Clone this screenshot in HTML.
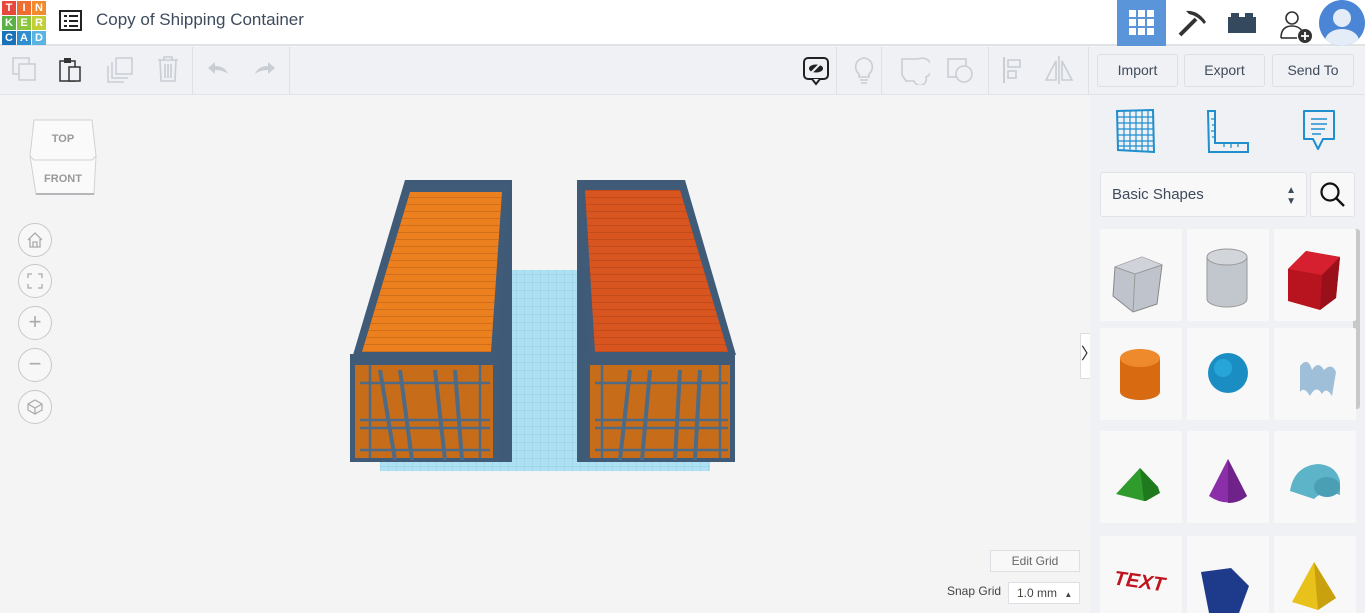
<!DOCTYPE html>
<html style="overflow:hidden;height:613px"><head><meta charset="utf-8"><style>
*{box-sizing:border-box;margin:0;padding:0}
html,body{overflow:hidden}
body{width:1365px;height:613px;overflow:hidden;font-family:"Liberation Sans",sans-serif;background:#f4f4f5;position:relative}
.abs{position:absolute}
#hdr{left:0;top:0;width:1365px;height:46px;background:#fff;border-bottom:2px solid #dfe2e6}
#tb{left:0;top:47px;width:1365px;height:48px;background:#f0f1f4;border-bottom:1px solid #e1e3e7}
.btn{position:absolute;top:54px;height:33px;border:1px solid #dcdfe3;border-radius:3px;background:#f0f1f4;color:#3e4b5b;font-size:14px;text-align:center;line-height:31px}
#side{left:1090px;top:95px;width:275px;height:518px;background:#f0f1f4;overflow:hidden}
.card{position:absolute;width:82px;height:92px;background:#f8f8f9;border-radius:2px;overflow:hidden}
.circ{position:absolute;left:18px;width:34px;height:34px;border:1px solid #c5c8cc;border-radius:50%;background:#f7f7f7;color:#aaa;text-align:center;line-height:30px;font-size:22px}
</style></head><body>
<div id="hdr" class="abs">
 <div class="abs" style="left:2px;top:1px;width:44px;height:43px;font:bold 11px 'Liberation Sans';color:#fff;text-align:center;line-height:14px">
  <div style="display:flex"><span style="width:14px;background:#e8483b;margin:0 1px 1px 0">T</span><span style="width:14px;background:#ee6d2f;margin:0 1px 1px 0">I</span><span style="width:14px;background:#f18b2b;margin-bottom:1px">N</span></div>
  <div style="display:flex"><span style="width:14px;background:#5bb244;margin:0 1px 1px 0">K</span><span style="width:14px;background:#8cc63f;margin:0 1px 1px 0">E</span><span style="width:14px;background:#c2cf35;margin-bottom:1px">R</span></div>
  <div style="display:flex"><span style="width:14px;background:#1a72b9;margin-right:1px">C</span><span style="width:14px;background:#2f8fd0;margin-right:1px">A</span><span style="width:14px;background:#59b4e2">D</span></div>
 </div>
 <svg class="abs" style="left:59px;top:10px" width="24" height="22"><rect x="1" y="1" width="21" height="19" fill="none" stroke="#222" stroke-width="2"/><g fill="#222"><rect x="5" y="5" width="3" height="2"/><rect x="10" y="5" width="9" height="2"/><rect x="5" y="10" width="3" height="2"/><rect x="10" y="10" width="9" height="2"/><rect x="5" y="15" width="3" height="2"/><rect x="10" y="15" width="9" height="2"/></g></svg>
 <div class="abs" style="left:96px;top:10px;font-size:17px;color:#3d4b5c">Copy of Shipping Container</div>
 <div class="abs" style="left:1117px;top:0;width:49px;height:46px;background:#5a95d9"></div>
 <svg class="abs" style="left:1129px;top:10px" width="25" height="25"><g fill="#fff"><rect x="0" y="0" width="7" height="7"/><rect x="9" y="0" width="7" height="7"/><rect x="18" y="0" width="7" height="7"/><rect x="0" y="9" width="7" height="7"/><rect x="9" y="9" width="7" height="7"/><rect x="18" y="9" width="7" height="7"/><rect x="0" y="18" width="7" height="7"/><rect x="9" y="18" width="7" height="7"/><rect x="18" y="18" width="7" height="7"/></g></svg>
 <svg class="abs" style="left:1176px;top:8px" width="32" height="30"><path d="M4 27 L20 11" stroke="#333" stroke-width="4"/><path d="M10 3 Q22 2 30 14 L28 16 Q22 8 13 6 Z" fill="#333"/></svg>
 <svg class="abs" style="left:1228px;top:12px" width="28" height="22"><rect x="0" y="5" width="28" height="16" fill="#34485e"/><rect x="3" y="1" width="8" height="5" fill="#34485e"/><rect x="17" y="1" width="8" height="5" fill="#34485e"/></svg>
 <svg class="abs" style="left:1279px;top:8px" width="36" height="36"><circle cx="13" cy="10" r="6" fill="none" stroke="#333" stroke-width="1.6"/><path d="M2 30 Q2 18 13 18 Q20 18 23 23" fill="none" stroke="#333" stroke-width="1.6"/><path d="M2 30 H18" stroke="#333" stroke-width="1.6"/><circle cx="26" cy="28" r="7" fill="#333"/><path d="M26 24 V32 M22 28 H30" stroke="#fff" stroke-width="1.8"/></svg>
 <div class="abs" style="left:1319px;top:0;width:46px;height:46px;background:#4a86d5;border-radius:50%;overflow:hidden"><div class="abs" style="left:14px;top:9px;width:18px;height:18px;border-radius:50%;background:#e3ecf7"></div><div class="abs" style="left:6px;top:29px;width:34px;height:24px;border-radius:50%;background:#e3ecf7"></div></div>
</div>
<div id="tb" class="abs">
 <svg class="abs" style="left:12px;top:10px" width="26" height="26"><rect x="1" y="1" width="16" height="16" fill="none" stroke="#c9ced4" stroke-width="1.5"/><rect x="7" y="7" width="16" height="16" fill="#f0f1f4" stroke="#c9ced4" stroke-width="1.5"/></svg>
 <svg class="abs" style="left:59px;top:9px" width="24" height="28"><rect x="1" y="5" width="15" height="20" fill="none" stroke="#333" stroke-width="1.5"/><rect x="5" y="2" width="7" height="5" fill="#333"/><rect x="10" y="11" width="11" height="14" fill="#f0f1f4" stroke="#333" stroke-width="1.5"/></svg>
 <svg class="abs" style="left:107px;top:10px" width="28" height="26"><rect x="9" y="1" width="16" height="16" fill="none" stroke="#c9ced4" stroke-width="1.5"/><path d="M5 5 V21 H21 M1 9 V25 H17" fill="none" stroke="#c9ced4" stroke-width="1.5"/></svg>
 <svg class="abs" style="left:157px;top:9px" width="22" height="26"><path d="M1 4 H21 M7 4 V1 H15 V4 M3 4 L4 25 H18 L19 4 M8 8 V22 M11 8 V22 M14 8 V22" fill="none" stroke="#c9ced4" stroke-width="1.6"/></svg>
 <div class="abs" style="left:192px;top:0;width:1px;height:47px;background:#dde0e4"></div>
 <svg class="abs" style="left:206px;top:14px" width="24" height="16"><path d="M2 7 L9 1 V5 Q19 5 22 13 Q17 9 9 9 V13 Z" fill="#c9ced4"/></svg>
 <svg class="abs" style="left:253px;top:14px" width="24" height="16"><path d="M22 7 L15 1 V5 Q5 5 2 13 Q7 9 15 9 V13 Z" fill="#c9ced4"/></svg>
 <div class="abs" style="left:289px;top:0;width:1px;height:47px;background:#dde0e4"></div>
 <svg class="abs" style="left:803px;top:10px" width="26" height="30"><rect x="1" y="1" width="24" height="21" rx="4" fill="none" stroke="#222" stroke-width="2"/><path d="M9 22 L13 27 L17 22" fill="#f0f1f4" stroke="#222" stroke-width="2"/><ellipse cx="13" cy="11.5" rx="7" ry="4" fill="#222"/><path d="M7 17 L19 5" stroke="#f0f1f4" stroke-width="2"/></svg>
 <div class="abs" style="left:836px;top:0;width:1px;height:47px;background:#dde0e4"></div>
 <svg class="abs" style="left:852px;top:9px" width="24" height="30"><path d="M12 2 A9 9 0 0 1 17 18 V21 H7 V18 A9 9 0 0 1 12 2 Z M8 24 H16 M9 27 H15" fill="none" stroke="#c9ced4" stroke-width="1.6"/></svg>
 <div class="abs" style="left:881px;top:0;width:1px;height:47px;background:#dde0e4"></div>
 <svg class="abs" style="left:900px;top:10px" width="30" height="28"><path d="M2 2 H18 A8 8 0 0 1 26 20 A6 6 0 0 1 14 24 L6 24 L2 18 Z" fill="none" stroke="#c9ced4" stroke-width="1.6"/></svg>
 <svg class="abs" style="left:946px;top:10px" width="30" height="28"><rect x="2" y="2" width="18" height="18" fill="none" stroke="#c9ced4" stroke-width="1.6"/><circle cx="18" cy="17" r="8" fill="#f0f1f4" stroke="#c9ced4" stroke-width="1.6"/></svg>
 <div class="abs" style="left:988px;top:0;width:1px;height:47px;background:#dde0e4"></div>
 <svg class="abs" style="left:1002px;top:9px" width="22" height="28"><path d="M2 1 V27" stroke="#c9ced4" stroke-width="2"/><rect x="6" y="4" width="12" height="7" fill="none" stroke="#c9ced4" stroke-width="1.6"/><rect x="6" y="15" width="8" height="7" fill="none" stroke="#c9ced4" stroke-width="1.6"/></svg>
 <svg class="abs" style="left:1043px;top:8px" width="32" height="30"><path d="M16 1 V29" stroke="#c9ced4" stroke-width="1.6"/><path d="M13 6 L3 25 H13 Z M19 6 L29 25 H19 Z" fill="none" stroke="#c9ced4" stroke-width="1.6"/></svg>
 <div class="abs" style="left:1088px;top:0;width:1px;height:47px;background:#dde0e4"></div>
</div>
<div class="btn" style="left:1097px;width:81px">Import</div>
<div class="btn" style="left:1184px;width:81px">Export</div>
<div class="btn" style="left:1272px;width:82px">Send To</div>

<svg class="abs" style="left:28px;top:118px" width="70" height="82"><path d="M6 2 H64 L68 38 L66 76 H8 L2 38 Z" fill="#fafafa" stroke="#cfd1d4"/><path d="M2 38 L6 42 H64 L68 38" fill="none" stroke="#cfd1d4"/><path d="M8 76 H66" stroke="#b5b7ba" stroke-width="2"/><text x="35" y="24" font-family="Liberation Sans" font-weight="bold" font-size="11" fill="#999" text-anchor="middle">TOP</text><text x="35" y="64" font-family="Liberation Sans" font-weight="bold" font-size="11" fill="#999" text-anchor="middle">FRONT</text></svg>
<div class="circ" style="top:223px"><svg width="18" height="18" style="margin-top:7px"><path d="M2 9 L9 2 L16 9 M4 8 V16 H14 V8 M7 16 V11 H11 V16" fill="none" stroke="#aaa" stroke-width="1.3"/></svg></div>
<div class="circ" style="top:264px"><svg width="16" height="16" style="margin-top:8px"><path d="M1 5 V1 H5 M11 1 H15 V5 M15 11 V15 H11 M5 15 H1 V11" fill="none" stroke="#aaa" stroke-width="1.3"/></svg></div>
<div class="circ" style="top:306px">+</div>
<div class="circ" style="top:348px">−</div>
<div class="circ" style="top:390px"><svg width="18" height="18" style="margin-top:7px"><path d="M9 2 L16 6 V12 L9 16 L2 12 V6 Z M2 6 L9 10 L16 6 M9 10 V16" fill="none" stroke="#aaa" stroke-width="1.2"/></svg></div>

<svg class="abs" style="left:340px;top:170px" width="410" height="310">
 <defs>
  <pattern id="g" width="8" height="8" patternUnits="userSpaceOnUse"><rect width="8" height="8" fill="#aee0f2"/><path d="M0 0 H8 M0 0 V8" stroke="#86c9e4" stroke-width="0.7"/></pattern>
  <pattern id="st" width="10" height="7" patternUnits="userSpaceOnUse"><path d="M0 6.5 H10" stroke="#c86a1a" stroke-width="0.8"/></pattern>
  <pattern id="st2" width="10" height="7" patternUnits="userSpaceOnUse"><path d="M0 6.5 H10" stroke="#bd4a1a" stroke-width="0.8"/></pattern>
 </defs>
 <rect x="170" y="100" width="70" height="200" fill="url(#g)"/>
 <rect x="40" y="285" width="330" height="16" fill="url(#g)"/>
 <polygon points="155,10 172,10 172,292 157,292" fill="#3e5a77"/>
 <polygon points="65,10 170,10 157,185 13,185" fill="#3f5b78"/>
 <polygon points="70,22 162,22 151,182 22,182" fill="#ec7f1e"/>
 <polygon points="70,22 162,22 151,182 22,182" fill="url(#st)"/>
 <rect x="10" y="184" width="148" height="108" fill="#3f5b78"/>
 <rect x="15" y="195" width="138" height="93" fill="#c76c19"/>
 <g stroke="#4f6a85" stroke-width="4"><path d="M40 200 L55 290 M60 200 L72 290 M95 200 L105 290 M115 200 L122 290"/></g>
 <g stroke="#4f6a85" stroke-width="2.5"><path d="M20 213 H150 M20 250 H150 M20 258 H150 M20 280 H150 M30 195 V288 M140 195 V288"/></g>
 <polygon points="237,10 250,10 250,292 237,292" fill="#3e5a77"/>
 <polygon points="237,10 345,10 396,185 248,185" fill="#3f5b78"/>
 <polygon points="245,20 340,20 388,182 255,182" fill="#d95520"/>
 <polygon points="245,20 340,20 388,182 255,182" fill="url(#st2)"/>
 <rect x="245" y="184" width="150" height="108" fill="#3f5b78"/>
 <rect x="250" y="195" width="140" height="93" fill="#c76c19"/>
 <g stroke="#4f6a85" stroke-width="4"><path d="M290 200 L280 290 M310 200 L302 290 M340 200 L335 290 M360 200 L355 290"/></g>
 <g stroke="#4f6a85" stroke-width="2.5"><path d="M255 213 H388 M255 250 H388 M255 258 H388 M255 280 H388 M262 195 V288 M380 195 V288"/></g>
</svg>

<div class="abs" style="left:990px;top:550px;width:90px;height:22px;border:1px solid #dcdfe3;background:#f8f8f8;font-size:12px;color:#666;text-align:center;line-height:20px">Edit Grid</div>
<div class="abs" style="left:947px;top:584px;font-size:12px;color:#444">Snap Grid</div>
<div class="abs" style="left:1008px;top:582px;width:72px;height:22px;border:1px solid #dcdfe3;background:#fff;font-size:12px;color:#444;line-height:20px;padding-left:8px">1.0 mm <span style="font-size:8px;margin-left:4px">▲</span></div>

<div class="abs" style="left:1080px;top:333px;width:18px;height:46px;background:#fff;border:1px solid #ddd;font-size:16px;text-align:center;line-height:42px;color:#222">〉</div>

<div id="side" class="abs">
 <svg class="abs" style="left:25px;top:14px" width="40" height="44"><path d="M2 2 L38 1 L39 43 L3 41 Z" fill="none" stroke="#1f8fce" stroke-width="2"/><g stroke="#1f8fce" stroke-width="1.2"><path d="M9 2 V42 M15 2 V42 M21 2 V42 M27 2 V42 M33 2 V42 M2 8 H38 M2 14 H38 M2 20 H38 M2 26 H38 M3 32 H38 M3 37 H38"/></g></svg>
 <svg class="abs" style="left:116px;top:14px" width="44" height="44"><path d="M2 2 H9 V34 H42 V43 H3 Z" fill="none" stroke="#1f8fce" stroke-width="2"/><g stroke="#1f8fce" stroke-width="1.3"><path d="M9 10 H5 M9 16 H6 M9 22 H5 M9 28 H6 M18 34 V38 M25 34 V39 M32 34 V38"/></g></svg>
 <svg class="abs" style="left:211px;top:14px" width="36" height="46"><path d="M3 2 H33 V30 H22 L17 40 L12 30 H3 Z" fill="none" stroke="#1f8fce" stroke-width="2" stroke-linejoin="round"/><path d="M10 10 H26 M10 15 H26 M10 20 H24 M11 25 H20" stroke="#1f8fce" stroke-width="1.5"/></svg>
 <div class="abs" style="left:10px;top:77px;width:207px;height:45px;background:#f8f8f9;border:1px solid #e1e3e6;border-radius:3px;font-size:15px;color:#3d4b5c;line-height:43px;padding-left:11px">Basic Shapes<span style="position:absolute;right:10px;top:0;font-size:10px;line-height:11px;padding-top:12px">▲<br>▼</span></div>
 <div class="abs" style="left:220px;top:77px;width:45px;height:45px;background:#f8f8f9;border:1px solid #e1e3e6;border-radius:3px"><svg width="28" height="28" style="margin:8px"><circle cx="11" cy="11" r="8.5" fill="none" stroke="#111" stroke-width="2.2"/><path d="M17 17 L25 25" stroke="#111" stroke-width="2.4"/></svg></div>
 <div class="abs" style="left:263px;top:134px;width:7px;height:180px;background:#c8c8c8;border-radius:3px"></div>
</div>
<div class="card" style="left:1100px;top:229px"><svg width="82" height="92"><polygon points="15,38 42,28 62,36 57,75 33,83 13,67" fill="#bfc4cc" stroke="#888"/><polygon points="15,38 42,28 62,36 35,45" fill="#d0d4da"/><path d="M15,38 L35,45 L62,36 M35,45 L33,83" stroke="#999" fill="none"/></svg></div>
<div class="card" style="left:1187px;top:229px"><svg width="82" height="92"><path d="M20 28 V70 A20 8 0 0 0 60 70 V28 Z" fill="#c2c6cd" stroke="#999"/><ellipse cx="40" cy="28" rx="20" ry="8" fill="#d2d5da" stroke="#999"/></svg></div>
<div class="card" style="left:1274px;top:229px"><svg width="82" height="92"><polygon points="14,40 32,22 66,28 62,69 46,81 14,72" fill="#b8141f"/><polygon points="14,40 32,22 66,28 48,46" fill="#d62030"/><polygon points="48,46 66,28 62,69 46,81" fill="#9a101a"/></svg></div>
<div class="card" style="left:1100px;top:328px"><svg width="82" height="92"><path d="M20 30 V64 A20 8 0 0 0 60 64 V30 Z" fill="#d86a12"/><ellipse cx="40" cy="30" rx="20" ry="9" fill="#ef8a2c"/></svg></div>
<div class="card" style="left:1187px;top:328px"><svg width="82" height="92"><circle cx="41" cy="45" r="20" fill="#1a8ec2"/><circle cx="36" cy="40" r="9" fill="#27a5d8"/></svg></div>
<div class="card" style="left:1274px;top:328px"><svg width="82" height="92"><path d="M26 38 Q34 28 38 42 Q44 32 50 42 Q58 34 62 44 L58 68 Q52 58 48 66 Q42 56 36 68 Q30 58 26 64 Z" fill="#9fbfd8"/></svg></div>
<div class="card" style="left:1100px;top:431px"><svg width="82" height="92"><polygon points="16,63 40,37 58,56 44,70" fill="#2e9b2c"/><polygon points="40,37 58,56 60,62 46,70 44,70" fill="#1f7a1e"/></svg></div>
<div class="card" style="left:1187px;top:431px"><svg width="82" height="92"><path d="M41 28 L22 65 Q41 78 60 65 Z" fill="#8a2fa8"/><path d="M41 28 L41 72 Q52 72 60 65 Z" fill="#6f2289"/></svg></div>
<div class="card" style="left:1274px;top:431px"><svg width="82" height="92"><path d="M16 60 Q20 35 44 33 Q62 34 66 50 V64 Q50 58 40 68 Z" fill="#5db3c8"/><ellipse cx="53" cy="56" rx="13" ry="10" fill="#4a9fb5"/></svg></div>
<div class="card" style="left:1100px;top:536px;height:77px"><svg width="82" height="80"><text x="14" y="52" font-family="Liberation Sans" font-weight="bold" font-style="italic" font-size="20" fill="#c0141c" transform="rotate(8 40 45)">TEXT</text></svg></div>
<div class="card" style="left:1187px;top:536px;height:77px"><svg width="82" height="80"><polygon points="14,36 44,32 62,50 52,77 22,77" fill="#1e3a8a"/></svg></div>
<div class="card" style="left:1274px;top:536px;height:77px"><svg width="82" height="80"><polygon points="40,26 18,66 44,74 62,62" fill="#e8c21a"/><polygon points="40,26 44,74 62,62" fill="#c9a10f"/></svg></div>
</body></html>
